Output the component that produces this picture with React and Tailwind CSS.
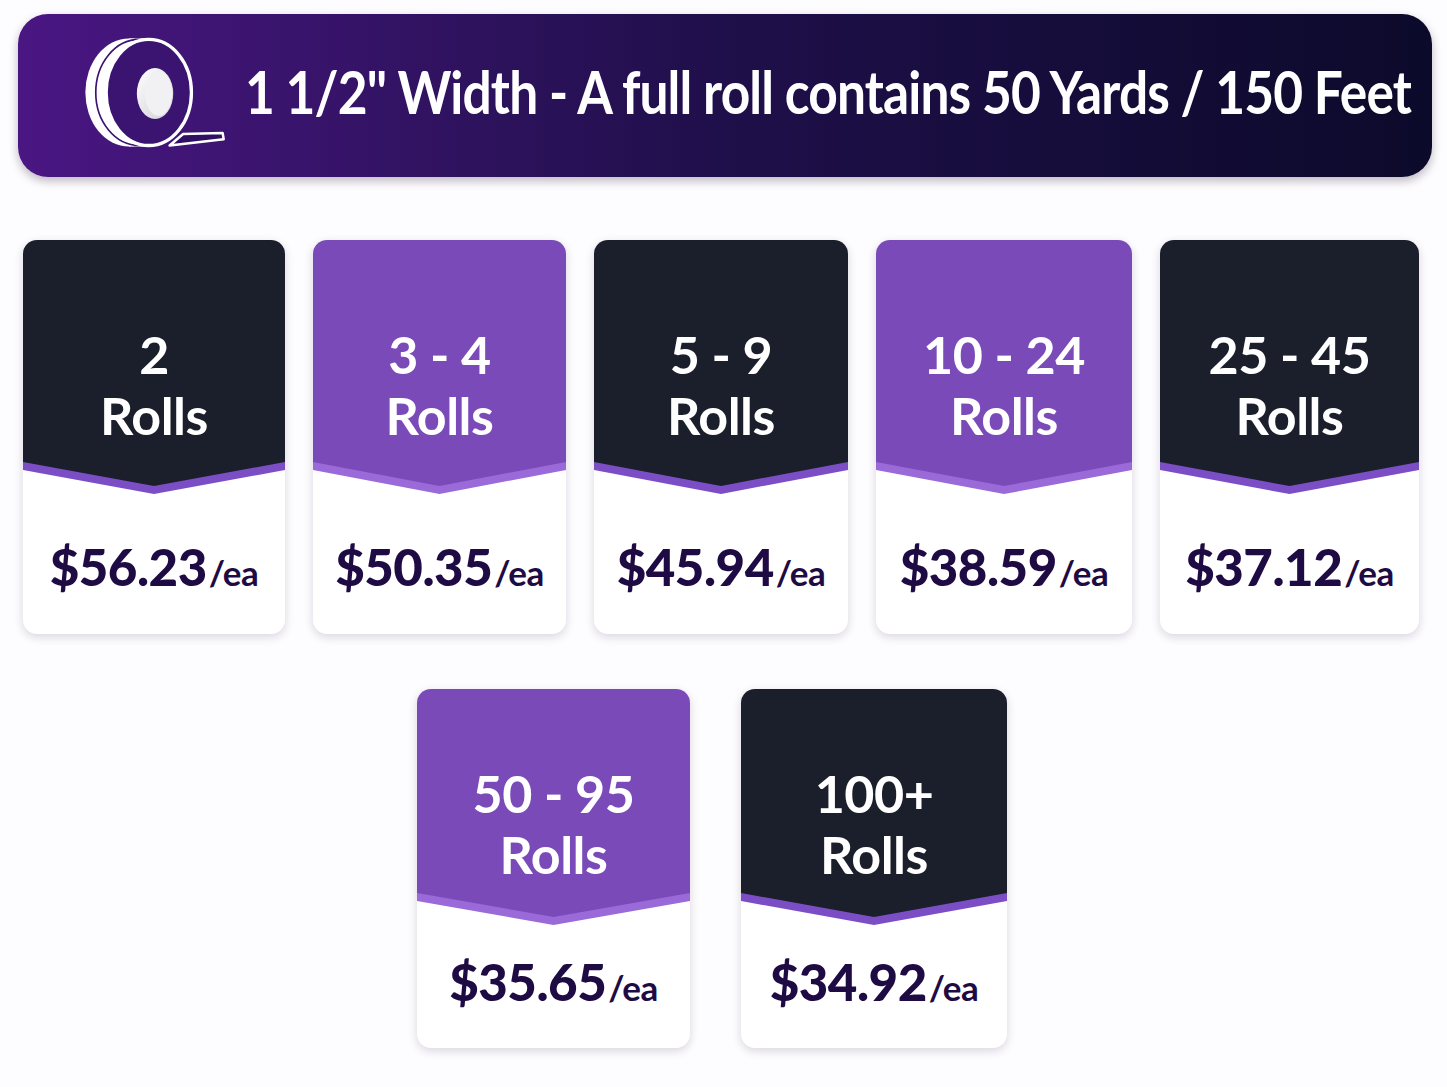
import React from 'react';

const font = { fontFamily: 'Lato, "Noto Sans", sans-serif' };

const rowOne = [
  { qty: '2', price: '$56.23', tone: 'dark', w: 'w-[262px]' },
  { qty: '3 - 4', price: '$50.35', tone: 'purple', w: 'w-[253px]' },
  { qty: '5 - 9', price: '$45.94', tone: 'dark', w: 'w-[254px]' },
  { qty: '10 - 24', price: '$38.59', tone: 'purple', w: 'w-[256px]' },
  { qty: '25 - 45', price: '$37.12', tone: 'dark', w: 'w-[259px]' },
];

const rowTwo = [
  { qty: '50 - 95', price: '$35.65', tone: 'purple', w: 'w-[273px]' },
  { qty: '100+', price: '$34.92', tone: 'dark', w: 'w-[266px]' },
];

const TapeIcon = () => (
  <svg width="156" height="123" viewBox="80 32 150 118" className="shrink-0 -ml-[4px] -mt-[4px]">
    <defs>
      <linearGradient id="hole" x1="0" y1="0" x2="1" y2="1">
        <stop offset="0" stopColor="#ffffff" />
        <stop offset="1" stopColor="#cfcfd6" />
      </linearGradient>
    </defs>
    {/* roll body */}
    <ellipse cx="131" cy="90" rx="42" ry="52" fill="#ffffff" />
    <rect x="131" y="38" width="20" height="104" fill="#ffffff" />
    <path d="M141 39 A42 51 0 0 0 141 141" fill="none" stroke="#3b1370" strokeWidth="1.6" />
    {/* tail */}
    <polygon points="170,141 183,130 221,129 222,135" fill="#2f1062" stroke="#ffffff" strokeWidth="2.4" strokeLinejoin="round" />
    {/* front face */}
    <ellipse cx="150" cy="90" rx="41" ry="51" fill="#3a1470" stroke="#ffffff" strokeWidth="3.2" />
    {/* core */}
    <ellipse cx="156" cy="91" rx="17.5" ry="24.5" fill="url(#hole)" />
    <ellipse cx="159.5" cy="91" rx="13" ry="21.5" fill="#f1f1f4" />
  </svg>
);

const Card = ({ qty, price, tone, w, tall }) => {
  const dark = tone === 'dark';
  const top = dark ? '#1b1f2b' : '#7a4bb8';
  const band = dark ? '#7b4ec6' : '#9a6ad8';
  return (
    <div
      className={`${w} ${tall ? 'h-[394px]' : 'h-[359px]'} flex flex-col overflow-hidden rounded-[14px] bg-white shadow-[0_3px_10px_rgba(30,20,60,0.16)]`}
    >
      <div
        className={`${dark ? 'bg-[#1b1f2b]' : 'bg-[#7a4bb8]'} ${tall ? 'h-[222px] pt-[84px]' : 'h-[204px] pt-[74px]'} flex flex-col items-center text-white font-bold text-[52px] leading-[61px] tracking-[-0.5px]`}
      >
        <div>{qty}</div>
        <div>Rolls</div>
      </div>
      <svg width="100%" height="32" viewBox="0 0 100 32" preserveAspectRatio="none" className="block">
        <polygon points="0,0 100,0 100,8 50,32 0,8" fill={band} />
        <polygon points="0,0 100,0 50,24" fill={top} />
      </svg>
      <div className={`flex flex-1 items-start justify-center ${tall ? 'pt-[47px]' : 'pt-[31px]'} text-[#1f0b44]`}>
        <span className="text-[51px] font-black tracking-[-0.5px] leading-none">{price}</span>
        <span className="text-[35px] font-bold leading-none mt-[14px] ml-[2px] tracking-[-0.5px]">/ea</span>
      </div>
    </div>
  );
};

export default function App() {
  return (
    <div className="min-h-[1087px] w-[1447px] overflow-hidden bg-[#fdfcfe] pt-[14px]" style={font}>
      <div className="ml-[18px] flex h-[163px] w-[1414px] items-center overflow-hidden rounded-[30px] bg-gradient-to-r from-[#4a1683] via-[#1f0f4a] to-[#0c0a2b] pl-[62px] shadow-[0_4px_10px_rgba(20,10,40,0.28)]">
        <TapeIcon />
        <h1 className="ml-[13px] -mt-[8px] origin-left scale-x-[0.872] text-[59px] font-bold leading-none tracking-[-1px] text-white whitespace-nowrap">
          1 1/2" Width - A full roll contains 50 Yards / 150 Feet
        </h1>
      </div>

      <div className="mt-[63px] ml-[23px] flex gap-[28px]">
        {rowOne.map((c) => (
          <Card key={c.qty} {...c} tall />
        ))}
      </div>

      <div className="mt-[55px] ml-[417px] flex gap-[51px]">
        {rowTwo.map((c) => (
          <Card key={c.qty} {...c} />
        ))}
      </div>
    </div>
  );
}
